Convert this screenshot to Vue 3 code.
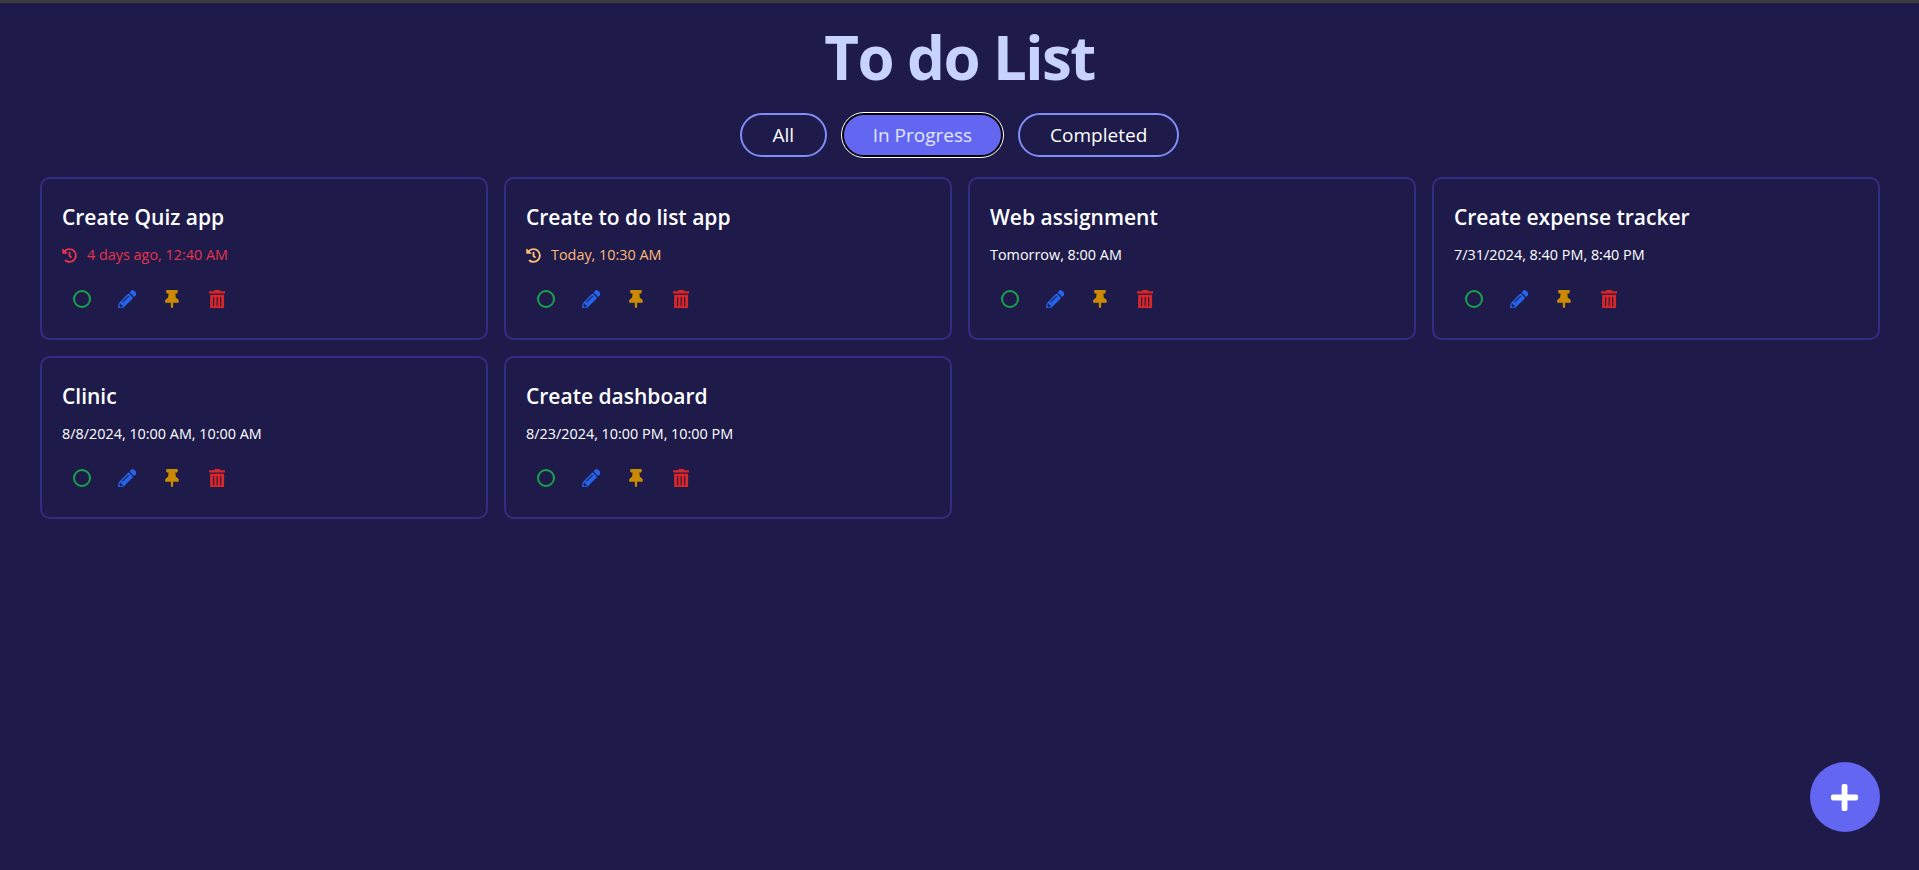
<script setup>
const tasks = [
  { title: 'Create Quiz app', date: '4 days ago, 12:40 AM', tone: 'overdue', history: true },
  { title: 'Create to do list app', date: 'Today, 10:30 AM', tone: 'today', history: true },
  { title: 'Web assignment', date: 'Tomorrow, 8:00 AM' },
  { title: 'Create expense tracker', date: '7/31/2024, 8:40 PM, 8:40 PM' },
  { title: 'Clinic', date: '8/8/2024, 10:00 AM, 10:00 AM' },
  { title: 'Create dashboard', date: '8/23/2024, 10:00 PM, 10:00 PM' },
]
const filters = ['All', 'In Progress', 'Completed']
</script>

<template>
  <div class="page">
    <div class="topbar"></div>
    <h1 class="title">To do List</h1>
    <div class="filters">
      <button v-for="f in filters" :key="f" class="filter" :class="{ active: f === 'In Progress' }">{{ f }}</button>
    </div>
    <div class="grid">
      <div v-for="t in tasks" :key="t.title" class="card">
        <h2 class="card-title">{{ t.title }}</h2>
        <div class="date" :class="t.tone">
          <svg v-if="t.history" class="hist" viewBox="0 0 512 512"><path fill="currentColor" d="M504 255.531c.253 136.64-111.18 248.372-247.82 248.468-59.015.042-113.223-20.53-155.822-54.911-11.077-8.94-11.905-25.541-1.839-35.607l11.267-11.267c8.609-8.609 22.353-9.551 31.891-1.984C173.062 425.135 212.781 440 256 440c101.705 0 184-82.311 184-184 0-101.705-82.311-184-184-184-48.814 0-93.149 18.969-126.068 49.932l50.754 50.754c10.08 10.08 2.941 27.314-11.313 27.314H24c-8.837 0-16-7.163-16-16V38.627c0-14.254 17.234-21.393 27.314-11.314l49.372 49.372C129.209 34.136 189.552 8 256 8c136.81 0 247.747 110.78 248 247.531zm-180.912 78.784l9.823-12.63c8.138-10.463 6.253-25.542-4.21-33.679L288 256.349V152c0-13.255-10.745-24-24-24h-16c-13.255 0-24 10.745-24 24v135.651l65.409 50.874c10.463 8.137 25.541 6.253 33.679-4.21z"/></svg>
          <span>{{ t.date }}</span>
        </div>
        <div class="actions">
          <button class="act green"><svg class="ring" viewBox="0 0 18 18"><circle cx="9" cy="9" r="8" fill="none" stroke="currentColor" stroke-width="2"/></svg></button>
          <button class="act blue"><svg viewBox="0 0 512 512"><path fill="currentColor" d="M497.9 142.1l-46.1 46.1c-4.7 4.7-12.3 4.7-17 0l-111-111c-4.7-4.7-4.7-12.3 0-17l46.1-46.1c18.7-18.7 49.1-18.7 67.9 0l60.1 60.1c18.8 18.7 18.8 49.1 0 67.9zM284.2 99.8L21.6 362.4.4 483.9c-2.9 16.4 11.4 30.6 27.8 27.8l121.5-21.3 262.6-262.6c4.7-4.7 4.7-12.3 0-17l-111-111c-4.8-4.7-12.4-4.7-17.1 0zM124.1 339.9c-5.5-5.5-5.5-14.3 0-19.8l154-154c5.5-5.5 14.3-5.5 19.8 0s5.5 14.3 0 19.8l-154 154c-5.5 5.5-14.3 5.5-19.8 0zM88 424h48v36.3l-64.5 11.3-31.1-31.1L51.7 376H88v48z"/></svg></button>
          <button class="act yellow"><svg viewBox="0 0 384 512"><path fill="currentColor" d="M298.028 214.267L285.793 96H328c13.255 0 24-10.745 24-24V24c0-13.255-10.745-24-24-24H56C42.745 0 32 10.745 32 24v48c0 13.255 10.745 24 24 24h42.207L85.972 214.267C37.465 236.82 0 277.261 0 328c0 13.255 10.745 24 24 24h136v104.007c0 1.242.289 2.467.845 3.578l24 48c2.941 5.882 11.364 5.893 14.311 0l24-48a8.008 8.008 0 0 0 .845-3.578V352h136c13.255 0 24-10.745 24-24-.001-51.183-37.983-91.42-85.973-113.733z"/></svg></button>
          <button class="act red"><svg viewBox="0 0 448 512"><path fill="currentColor" d="M32 464a48 48 0 0 0 48 48h288a48 48 0 0 0 48-48V128H32zm272-256a16 16 0 0 1 32 0v224a16 16 0 0 1-32 0zm-96 0a16 16 0 0 1 32 0v224a16 16 0 0 1-32 0zm-96 0a16 16 0 0 1 32 0v224a16 16 0 0 1-32 0zM432 32H312l-9.4-18.7A24 24 0 0 0 281.1 0H166.8a23.72 23.72 0 0 0-21.4 13.3L136 32H16A16 16 0 0 0 0 48v32a16 16 0 0 0 16 16h416a16 16 0 0 0 16-16V48a16 16 0 0 0-16-16z"/></svg></button>
        </div>
      </div>
    </div>
    <button class="fab"><svg viewBox="0 0 448 512"><path fill="currentColor" d="M416 208H272V64c0-17.67-14.33-32-32-32h-32c-17.67 0-32 14.33-32 32v144H32c-17.67 0-32 14.33-32 32v32c0 17.67 14.33 32 32 32h144v144c0 17.67 14.33 32 32 32h32c17.67 0 32-14.33 32-32V304h144c17.67 0 32-14.33 32-32v-32c0-17.67-14.33-32-32-32z"/></svg></button>
  </div>
</template>

<style>
html, body { margin: 0; background: #1e1b4b; }
</style>

<style scoped>
.page {
  position: relative;
  height: 870px;
  overflow: hidden;
  background: #1e1b4b;
  font-family: "Open Sans", "Noto Sans", sans-serif;
  color: #fff;
  box-sizing: border-box;
}
.topbar { height: 3px; background: #3c3c3c; }
.title {
  margin: 0;
  padding-top: 12px;
  height: 84px;
  box-sizing: content-box;
  text-align: center;
  font-size: 60px;
  line-height: 84px;
  font-weight: 700;
  letter-spacing: -1.6px;
  color: #c7d2fe;
}
.filters {
  display: flex;
  justify-content: center;
  gap: 15px;
  margin-top: 14px;
}
.filter {
  height: 44px;
  min-width: 87px;
  padding: 0 30px;
  border: 2px solid #818cf8;
  border-radius: 22px;
  background: transparent;
  color: #fff;
  font: 400 19px "Open Sans", "Noto Sans", sans-serif;
}
.filter.active {
  padding: 0 29px;
  background: #6366f1;
  color: #e0e7ff;
  border-color: #000;
  outline: 1px solid #fff;
}
.grid {
  display: grid;
  grid-template-columns: repeat(4, 1fr);
  gap: 16px;
  padding: 0 39px 0 40px;
  margin-top: 20px;
}
.card {
  height: 163px;
  box-sizing: border-box;
  padding: 22px 20px 20px;
  border: 2px solid #312e81;
  border-radius: 10px;
}
.card-title {
  margin: 0;
  font-size: 21px;
  line-height: 32px;
  font-weight: 600;
}
.date {
  display: flex;
  align-items: center;
  gap: 10px;
  margin-top: 12px;
  height: 20px;
  font-size: 14.4px;
  line-height: 20px;
}
.hist { width: 15px; height: 15px; }
.overdue { color: #e5344a; }
.today { color: #fdba74; }
.actions {
  display: flex;
  gap: 5px;
  margin-top: 14px;
}
.act {
  width: 40px;
  height: 40px;
  padding: 0;
  border: 0;
  background: transparent;
  display: flex;
  align-items: center;
  justify-content: center;
}
.act svg { height: 18.6px; display: block; }
.act svg.ring { height: 18px; }
.green { color: #16a34a; }
.blue { color: #2563eb; }
.yellow { color: #ca8a04; }
.red { color: #dc2626; }
.fab {
  position: absolute;
  right: 39px;
  bottom: 38px;
  width: 70px;
  height: 70px;
  padding: 0;
  border: 0;
  border-radius: 50%;
  background: #6366f1;
  color: #fff;
  display: flex;
  align-items: center;
  justify-content: center;
}
.fab svg { height: 31px; display: block; }
</style>
